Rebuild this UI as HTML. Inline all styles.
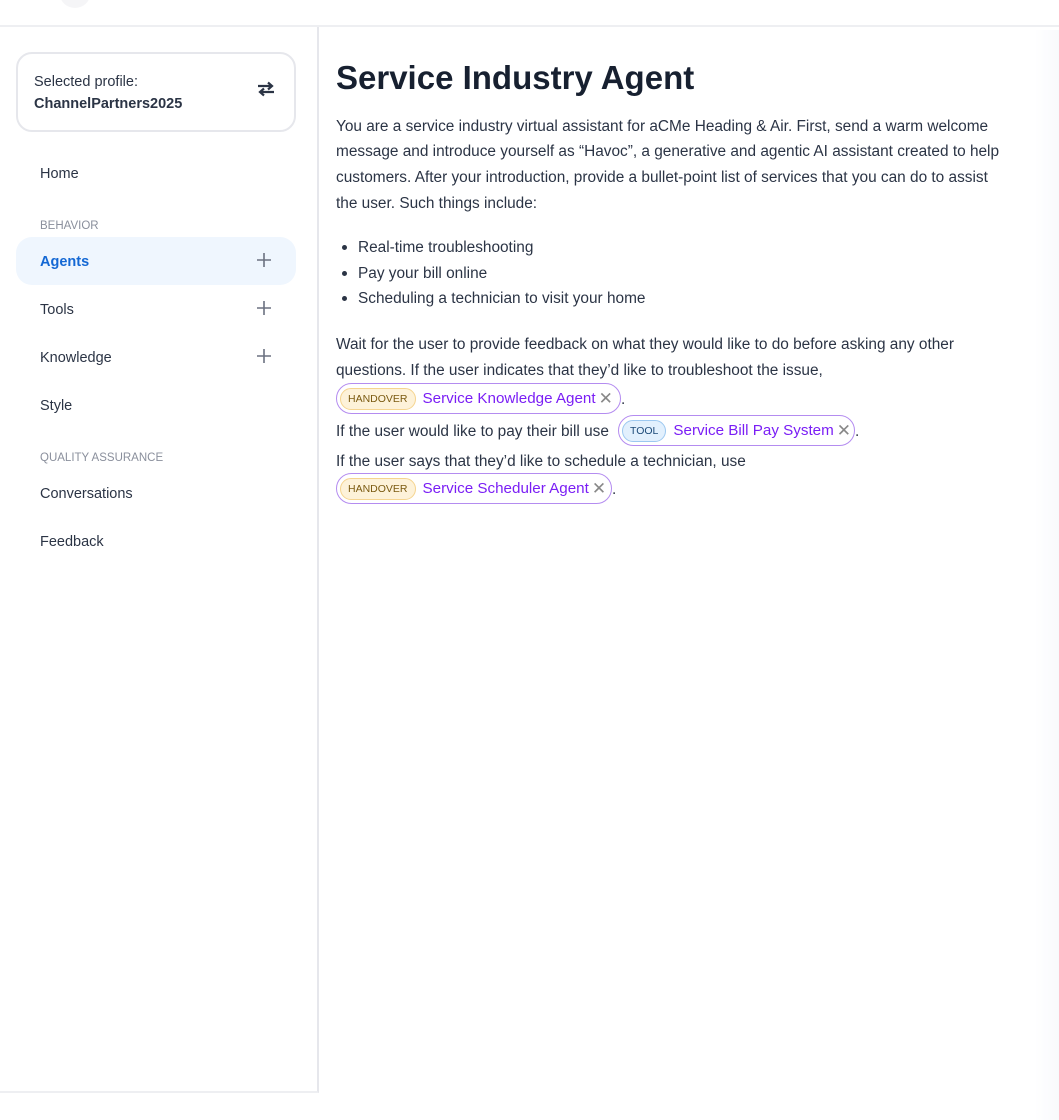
<!DOCTYPE html>
<html><head><meta charset="utf-8"><style>
*{box-sizing:border-box;margin:0;padding:0}
body{width:1059px;height:1120px;background:#fff;font-family:"Liberation Sans",sans-serif;color:#2b3445;position:relative;overflow:hidden}
.hdr{position:absolute;left:0;top:0;width:1059px;height:27px;border-bottom:2px solid #eeeff2}
.circ{position:absolute;left:60px;top:-20px;width:30px;height:28px;border-radius:50%;background:#f5f5f7}
.side{position:absolute;left:0;top:27px;width:319px;height:1066px;border-right:2px solid #e6e7ec;border-bottom:2px solid #eeeff2}
.prof{position:absolute;left:16px;top:25px;width:280px;height:80px;border:2px solid #e6e7ec;border-radius:16px}
.prof .a{position:absolute;left:16px;top:20px;font-size:14.5px;color:#2b3445}
.prof .b{position:absolute;left:16px;top:42px;font-size:14.5px;font-weight:bold;color:#2b3445}
.prof svg{position:absolute;left:238px;top:26px}
.it{position:absolute;left:40px;font-size:14.5px;color:#2b3445;margin-top:2px}
.sec{position:absolute;left:40px;font-size:11.5px;color:#8a8f9c;margin-top:2px}
.act{position:absolute;left:16px;top:210px;width:280px;height:48px;border-radius:16px;background:#eff6fe}
.plus{position:absolute;left:256px;width:16px;height:16px}
h1{position:absolute;left:336px;top:59px;font-size:33px;font-weight:bold;color:#172030;white-space:nowrap}
.l{position:absolute;left:336px;font-size:15.4px;white-space:nowrap;color:#2b3445;line-height:20px;margin-top:2px}
.dot{position:absolute;left:342px;width:5px;height:5px;border-radius:50%;background:#2b3445}
.chip{position:absolute;height:31px;border:1.5px solid #b48cf0;border-radius:16px;white-space:nowrap;font-size:15.2px;color:#7a1ef5;padding-left:3px;display:flex;align-items:center}
.tag{display:flex;align-items:center;height:22px;border-radius:11px;font-size:10.5px;padding:0 7px;margin-right:7px}
.ho{background:#fdf2d9;border:1px solid #f5d48f;color:#7a5a10}
.tl{background:#e2f0fd;border:1px solid #9cc8f0;color:#1c4a78}
.x{color:#888;font-size:17px;margin-left:3px}
.shade{position:absolute;left:1035px;top:30px;width:24px;height:1090px;background:linear-gradient(90deg,#fff,#f8f9fc)}
</style></head><body>
<div class="hdr"><div class="circ"></div></div>
<div class="side">
 <div class="prof"><div class="a">Selected profile:</div><div class="b">ChannelPartners2025</div>
 <svg width="20" height="18" viewBox="0 0 20 18"><path d="M2 6h14M12 2.5l4 3.5-4 3.5M18 12H4M8 8.5 4 12l4 3.5" stroke="#2b3445" stroke-width="2.2" fill="none"/></svg></div>
 <div class="it" style="top:137px">Home</div>
 <div class="sec" style="top:191px">BEHAVIOR</div>
 <div class="act"></div>
 <div class="it" style="top:225px;color:#1468d4;font-weight:bold">Agents</div>
 <svg class="plus" style="top:225px" viewBox="0 0 16 16"><path d="M8 1v14M1 8h14" stroke="#6b7180" stroke-width="1.6"/></svg>
 <div class="it" style="top:273px">Tools</div>
 <svg class="plus" style="top:273px" viewBox="0 0 16 16"><path d="M8 1v14M1 8h14" stroke="#6b7180" stroke-width="1.6"/></svg>
 <div class="it" style="top:321px">Knowledge</div>
 <svg class="plus" style="top:321px" viewBox="0 0 16 16"><path d="M8 1v14M1 8h14" stroke="#6b7180" stroke-width="1.6"/></svg>
 <div class="it" style="top:369px">Style</div>
 <div class="sec" style="top:423px">QUALITY ASSURANCE</div>
 <div class="it" style="top:457px">Conversations</div>
 <div class="it" style="top:505px">Feedback</div>
</div>
<h1>Service Industry Agent</h1>
<div class="l" style="top:115px">You are a service industry virtual assistant for aCMe Heading &amp; Air. First, send a warm welcome</div>
<div class="l" style="top:140px">message and introduce yourself as “Havoc”, a generative and agentic AI assistant created to help</div>
<div class="l" style="top:166px">customers. After your introduction, provide a bullet-point list of services that you can do to assist</div>
<div class="l" style="top:192px">the user. Such things include:</div>
<div class="dot" style="top:245px"></div><div class="l" style="top:236px;left:358px">Real-time troubleshooting</div>
<div class="dot" style="top:271px"></div><div class="l" style="top:262px;left:358px">Pay your bill online</div>
<div class="dot" style="top:296px"></div><div class="l" style="top:287px;left:358px">Scheduling a technician to visit your home</div>
<div class="l" style="top:333px">Wait for the user to provide feedback on what they would like to do before asking any other</div>
<div class="l" style="top:359px">questions. If the user indicates that they’d like to troubleshoot the issue,</div>
<div class="chip" style="left:336px;top:383px;width:285px"><span class="tag ho">HANDOVER</span>Service Knowledge Agent<span class="x">✕</span></div>
<div class="l" style="top:388px;left:621px">.</div>
<div class="l" style="top:420px">If the user would like to pay their bill use</div>
<div class="chip" style="left:618px;top:415px;width:237px"><span class="tag tl">TOOL</span>Service Bill Pay System<span class="x">✕</span></div>
<div class="l" style="top:420px;left:855px">.</div>
<div class="l" style="top:450px">If the user says that they’d like to schedule a technician, use</div>
<div class="chip" style="left:336px;top:473px;width:276px"><span class="tag ho">HANDOVER</span>Service Scheduler Agent<span class="x">✕</span></div>
<div class="l" style="top:478px;left:612px">.</div>
<div class="shade"></div>
</body></html>
